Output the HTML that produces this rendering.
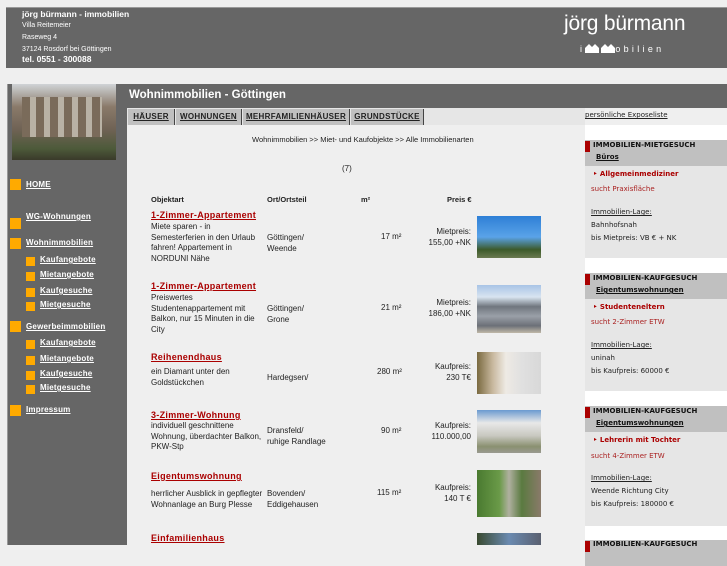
<!DOCTYPE html>
<html><head><meta charset="utf-8"><style>
*{margin:0;padding:0;box-sizing:border-box}
body{width:727px;height:545px;overflow:hidden;background:#efefef;font-family:"Liberation Sans",sans-serif;position:relative}
.a{position:absolute}
#hdr{left:6px;top:7px;width:721px;height:61px;background:#666;border-top:1px solid #999}
.hl{color:#fff;font-size:7px;line-height:12px}
#left{left:7px;top:84px;width:116px;height:461px;background:#666;border-left:1px solid #999;border-right:1px solid #999}
.nav{color:#fff;font-size:8px;text-decoration:underline;font-weight:bold;letter-spacing:.2px}
.sq{width:11px;height:11px;background:#ffaa00}
.sq2{width:9px;height:9px;background:#ffaa00}
#mh{left:122px;top:84px;width:605px;height:24px;background:#666;color:#fff;font-size:11.5px;font-weight:bold;padding:5px 0 0 7px}
#strip{left:122px;top:108px;width:5px;height:437px;background:#666}
#tabrow{left:127px;top:108px;width:458px;height:17px;background:#e6e6e6}
.tab{top:109px;height:16px;background:#c0c0c0;font-size:8px;font-weight:bold;text-decoration:underline;color:#222;padding-top:3px;text-align:center;border-right:1px solid #444;letter-spacing:.3px}
.t{font-size:8px;color:#222;line-height:10.7px}
.ti{font-size:9px;font-weight:bold;color:#a00;text-decoration:underline;letter-spacing:.3px}
.ph{left:477px;width:64px}
.rc{font-family:"DejaVu Sans",sans-serif;font-size:7px;line-height:13px}
.pbg{left:585px;width:142px;background:#e6e6e6}
.ph2{left:585px;width:142px;height:26px;background:#c0c0c0}
.red{width:5px;height:11px;background:#a00;left:585px}
</style></head><body>
<div id="hdr" class="a"></div>
<div class="a" style="left:22px;top:9px;color:#fff;font-size:8.5px;font-weight:bold">jörg bürmann - immobilien</div>
<div class="a hl" style="left:22px;top:20px">Villa Reitemeier<br>Raseweg 4<br>37124 Rosdorf bei Göttingen</div>
<div class="a" style="left:22px;top:54px;color:#fff;font-size:8.5px;font-weight:bold">tel. 0551 - 300088</div>
<div class="a" style="left:564px;top:12px;color:#fff;font-size:21px;letter-spacing:-.2px">jörg bürmann</div>
<div class="a" style="left:580px;top:44px;color:#fff;font-size:9px;letter-spacing:3.3px">i<span style="display:inline-block;width:30px;height:8px;vertical-align:-1px"><svg width="30" height="9"><path d="M0 9V4L4 0L7 3L10 0L14 4V9ZM16 9V4L20 0L23 3L26 0L30 4V9Z" fill="#fff"/></svg></span>obilien</div>

<div id="left" class="a"></div>
<div class="a" style="left:12px;top:84px;width:104px;height:76px;background:linear-gradient(180deg,#cfd3d6 0%,#8a7a6a 30%,#6f6254 60%,#4d5a3a 85%,#3a3a2a 100%)"></div>
<div class="a" style="left:22px;top:97px;width:80px;height:40px;background:repeating-linear-gradient(90deg,#7a6b5a 0 8px,#b9b2a5 8px 14px)"></div>
<div class="a sq" style="left:10px;top:179px"></div><div class="a nav" style="left:26px;top:180px">HOME</div>
<div class="a sq" style="left:10px;top:218px"></div><div class="a nav" style="left:26px;top:212px">WG-Wohnungen</div>
<div class="a sq" style="left:10px;top:238px"></div><div class="a nav" style="left:26px;top:238px">Wohnimmobilien</div>
<div class="a sq2" style="left:26px;top:257px"></div><div class="a nav" style="left:40px;top:255px">Kaufangebote</div>
<div class="a sq2" style="left:26px;top:272px"></div><div class="a nav" style="left:40px;top:270px">Mietangebote</div>
<div class="a sq2" style="left:26px;top:288px"></div><div class="a nav" style="left:40px;top:286px">Kaufgesuche</div>
<div class="a sq2" style="left:26px;top:302px"></div><div class="a nav" style="left:40px;top:300px">Mietgesuche</div>
<div class="a sq" style="left:10px;top:321px"></div><div class="a nav" style="left:26px;top:322px">Gewerbeimmobilien</div>
<div class="a sq2" style="left:26px;top:340px"></div><div class="a nav" style="left:40px;top:338px">Kaufangebote</div>
<div class="a sq2" style="left:26px;top:356px"></div><div class="a nav" style="left:40px;top:354px">Mietangebote</div>
<div class="a sq2" style="left:26px;top:371px"></div><div class="a nav" style="left:40px;top:369px">Kaufgesuche</div>
<div class="a sq2" style="left:26px;top:385px"></div><div class="a nav" style="left:40px;top:383px">Mietgesuche</div>
<div class="a sq" style="left:10px;top:405px"></div><div class="a nav" style="left:26px;top:405px">Impressum</div>

<div id="mh" class="a">Wohnimmobilien - Göttingen</div>
<div id="strip" class="a"></div>
<div id="tabrow" class="a"></div>
<div class="a tab" style="left:128px;width:47px">HÄUSER</div>
<div class="a tab" style="left:176px;width:66px">WOHNUNGEN</div>
<div class="a tab" style="left:243px;width:107px">MEHRFAMILIENHÄUSER</div>
<div class="a tab" style="left:351px;width:73px">GRUNDSTÜCKE</div>
<div class="a t" style="left:252px;top:135px;font-size:7.5px">Wohnimmobilien &gt;&gt; Miet- und Kaufobjekte &gt;&gt; Alle Immobilienarten</div>
<div class="a t" style="left:342px;top:164px">(7)</div>
<div class="a t" style="left:151px;top:195px;font-weight:bold;font-size:7.5px">Objektart</div>
<div class="a t" style="left:267px;top:195px;font-weight:bold;font-size:7.5px">Ort/Ortsteil</div>
<div class="a t" style="left:361px;top:195px;font-weight:bold;font-size:7.5px">m²</div>
<div class="a t" style="left:447px;top:195px;font-weight:bold;font-size:7.5px">Preis €</div>

<div class="a ti" style="left:151px;top:210px">1-Zimmer-Appartement</div>
<div class="a t" style="left:151px;top:222px;width:108px">Miete sparen - in Semesterferien in den Urlaub fahren! Appartement in NORDUNI Nähe</div>
<div class="a t" style="left:267px;top:233px">Göttingen/<br>Weende</div>
<div class="a t" style="left:381px;top:232px">17 m²</div>
<div class="a t" style="left:421px;top:227px;width:50px;text-align:right">Mietpreis:<br>155,00 +NK</div>
<div class="a ph" style="top:216px;height:42px;background:linear-gradient(180deg,#2e7fd6,#5aa3e8 50%,#3c5a2a 80%,#6a7a50)"></div>

<div class="a ti" style="left:151px;top:281px">1-Zimmer-Appartement</div>
<div class="a t" style="left:151px;top:293px;width:112px">Preiswertes Studentenappartement mit Balkon, nur 15 Minuten in die City</div>
<div class="a t" style="left:267px;top:304px">Göttingen/<br>Grone</div>
<div class="a t" style="left:381px;top:303px">21 m²</div>
<div class="a t" style="left:421px;top:298px;width:50px;text-align:right">Mietpreis:<br>186,00 +NK</div>
<div class="a ph" style="top:285px;height:48px;background:linear-gradient(180deg,#a8c4e6,#d8e4f0 25%,#70767e 45%,#9aa0a8 65%,#6c7078 85%,#c0b8a8)"></div>

<div class="a ti" style="left:151px;top:352px">Reihenendhaus</div>
<div class="a t" style="left:151px;top:367px;width:108px">ein Diamant unter den Goldstückchen</div>
<div class="a t" style="left:267px;top:373px">Hardegsen/</div>
<div class="a t" style="left:377px;top:367px">280 m²</div>
<div class="a t" style="left:421px;top:362px;width:50px;text-align:right">Kaufpreis:<br>230 T€</div>
<div class="a ph" style="top:352px;height:42px;background:linear-gradient(90deg,#7a6a40,#c9b9a0 25%,#eeeae4 45%,#e0e0e0 70%,#d8d8d8)"></div>

<div class="a ti" style="left:151px;top:410px">3-Zimmer-Wohnung</div>
<div class="a t" style="left:151px;top:421px;width:116px">individuell geschnittene Wohnung, überdachter Balkon, PKW-Stp</div>
<div class="a t" style="left:267px;top:426px">Dransfeld/<br>ruhige Randlage</div>
<div class="a t" style="left:381px;top:426px">90 m²</div>
<div class="a t" style="left:421px;top:421px;width:50px;text-align:right">Kaufpreis:<br>110.000,00</div>
<div class="a ph" style="top:410px;height:43px;background:linear-gradient(180deg,#6a9ad0,#e8e8e8 30%,#c8c8c0 60%,#8a9070 85%,#9a9a90)"></div>

<div class="a ti" style="left:151px;top:471px">Eigentumswohnung</div>
<div class="a t" style="left:151px;top:489px;width:116px">herrlicher Ausblick in gepflegter Wohnanlage an Burg Plesse</div>
<div class="a t" style="left:267px;top:489px">Bovenden/<br>Eddigehausen</div>
<div class="a t" style="left:377px;top:488px">115 m²</div>
<div class="a t" style="left:421px;top:483px;width:50px;text-align:right">Kaufpreis:<br>140 T €</div>
<div class="a ph" style="top:470px;height:47px;background:linear-gradient(90deg,#4a7a30,#6a9a48 35%,#b0b0a0 50%,#5a7a40 70%,#8a7a6a)"></div>

<div class="a ti" style="left:151px;top:533px">Einfamilienhaus</div>
<div class="a ph" style="top:533px;height:12px;background:linear-gradient(90deg,#3a4a30,#6a8ab0 50%,#5a6070)"></div>

<div class="a rc" style="left:585px;top:109px;text-decoration:underline;color:#222">persönliche Exposeliste</div>
<div class="a" style="left:585px;top:125px;width:142px;height:15px;background:#fff"></div>
<div class="a ph2" style="top:140px"></div><div class="a red" style="top:141px"></div>
<div class="a rc" style="left:593px;top:139px;font-weight:bold;color:#111">IMMOBILIEN-MIETGESUCH</div>
<div class="a rc" style="left:596px;top:151px;font-weight:bold;text-decoration:underline;color:#111">Büros</div>
<div class="a pbg" style="top:166px;height:92px"></div>
<div class="a rc" style="left:593px;top:168px;color:#a00;font-weight:bold">‣ Allgemeinmediziner</div>
<div class="a rc" style="left:591px;top:183px;color:#a22">sucht Praxisfläche</div>
<div class="a rc" style="left:591px;top:206px;color:#222;line-height:13px"><u>Immobilien-Lage:</u><br>Bahnhofsnah<br>bis Mietpreis: VB € + NK</div>
<div class="a" style="left:585px;top:258px;width:142px;height:15px;background:#fff"></div>
<div class="a ph2" style="top:273px"></div><div class="a red" style="top:274px"></div>
<div class="a rc" style="left:593px;top:272px;font-weight:bold;color:#111">IMMOBILIEN-KAUFGESUCH</div>
<div class="a rc" style="left:596px;top:284px;font-weight:bold;text-decoration:underline;color:#111">Eigentumswohnungen</div>
<div class="a pbg" style="top:299px;height:92px"></div>
<div class="a rc" style="left:593px;top:301px;color:#a00;font-weight:bold">‣ Studenteneltern</div>
<div class="a rc" style="left:591px;top:316px;color:#a22">sucht 2-Zimmer ETW</div>
<div class="a rc" style="left:591px;top:339px;color:#222;line-height:13px"><u>Immobilien-Lage:</u><br>uninah<br>bis Kaufpreis: 60000 €</div>
<div class="a" style="left:585px;top:391px;width:142px;height:15px;background:#fff"></div>
<div class="a ph2" style="top:406px"></div><div class="a red" style="top:407px"></div>
<div class="a rc" style="left:593px;top:405px;font-weight:bold;color:#111">IMMOBILIEN-KAUFGESUCH</div>
<div class="a rc" style="left:596px;top:417px;font-weight:bold;text-decoration:underline;color:#111">Eigentumswohnungen</div>
<div class="a pbg" style="top:432px;height:94px"></div>
<div class="a rc" style="left:593px;top:434px;color:#a00;font-weight:bold">‣ Lehrerin mit Tochter</div>
<div class="a rc" style="left:591px;top:450px;color:#a22">sucht 4-Zimmer ETW</div>
<div class="a rc" style="left:591px;top:472px;color:#222;line-height:13px"><u>Immobilien-Lage:</u><br>Weende Richtung City<br>bis Kaufpreis: 180000 €</div>
<div class="a" style="left:585px;top:526px;width:142px;height:14px;background:#fff"></div>
<div class="a ph2" style="top:540px"></div><div class="a red" style="top:541px"></div>
<div class="a rc" style="left:593px;top:538px;font-weight:bold;color:#111">IMMOBILIEN-KAUFGESUCH</div>
</body></html>
